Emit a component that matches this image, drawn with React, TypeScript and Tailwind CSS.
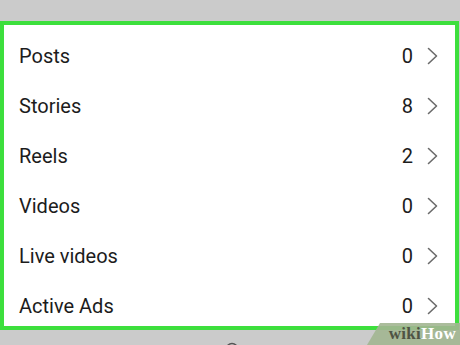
const rows = [
  { label: "Posts", count: 0 },
  { label: "Stories", count: 8 },
  { label: "Reels", count: 2 },
  { label: "Videos", count: 0 },
  { label: "Live videos", count: 0 },
  { label: "Active Ads", count: 0 },
];

function Chevron() {
  return (
    <svg width="11" height="18" viewBox="0 0 11 18" className="shrink-0">
      <path d="M1.5 1.5 L9.5 9 L1.5 16.5" fill="none" stroke="#6b6b6b" strokeWidth="1.6" strokeLinecap="round" strokeLinejoin="round" />
    </svg>
  );
}

export default function App() {
  return (
    <div className="relative w-[460px] h-[345px] overflow-hidden bg-[#cbcbcb] flex flex-col font-['Roboto',sans-serif]">
      {/* top strip */}
      <div className="h-[21px] shrink-0" />

      {/* highlighted list */}
      <div className="h-[309px] w-[459px] shrink-0 border-4 border-[#3ddf3d] bg-white overflow-hidden pt-[6px] pl-[15px] pr-[17px]">
        {rows.map((r) => (
          <div key={r.label} className="h-[50px] flex items-center">
            <span className="flex-1 text-[20px] text-[#1c1c1c]">{r.label}</span>
            <span className="text-[20px] text-[#1c1c1c] mr-[14px]">{r.count}</span>
            <Chevron />
          </div>
        ))}
      </div>

      {/* bottom strip */}
      <div className="flex-1 flex justify-center pt-[11px] pl-[4px]">
        <svg width="14" height="14" viewBox="0 0 14 14">
          <circle cx="7" cy="8" r="5.5" fill="none" stroke="#555" strokeWidth="1.5" />
        </svg>
      </div>

      {/* wikiHow watermark */}
      <div className="absolute right-0 bottom-0 w-[93px] h-[22px] bg-[#a2b691]/90 [clip-path:polygon(14%_0,100%_0,100%_100%,0_100%)]" />
      <div className="absolute right-[4px] bottom-[3px] font-['Liberation_Serif',serif] font-bold text-[17px] leading-none tracking-[0.3px]">
        <span className="text-[#4f5344]">wiki</span>
        <span className="text-white">How</span>
      </div>
    </div>
  );
}
